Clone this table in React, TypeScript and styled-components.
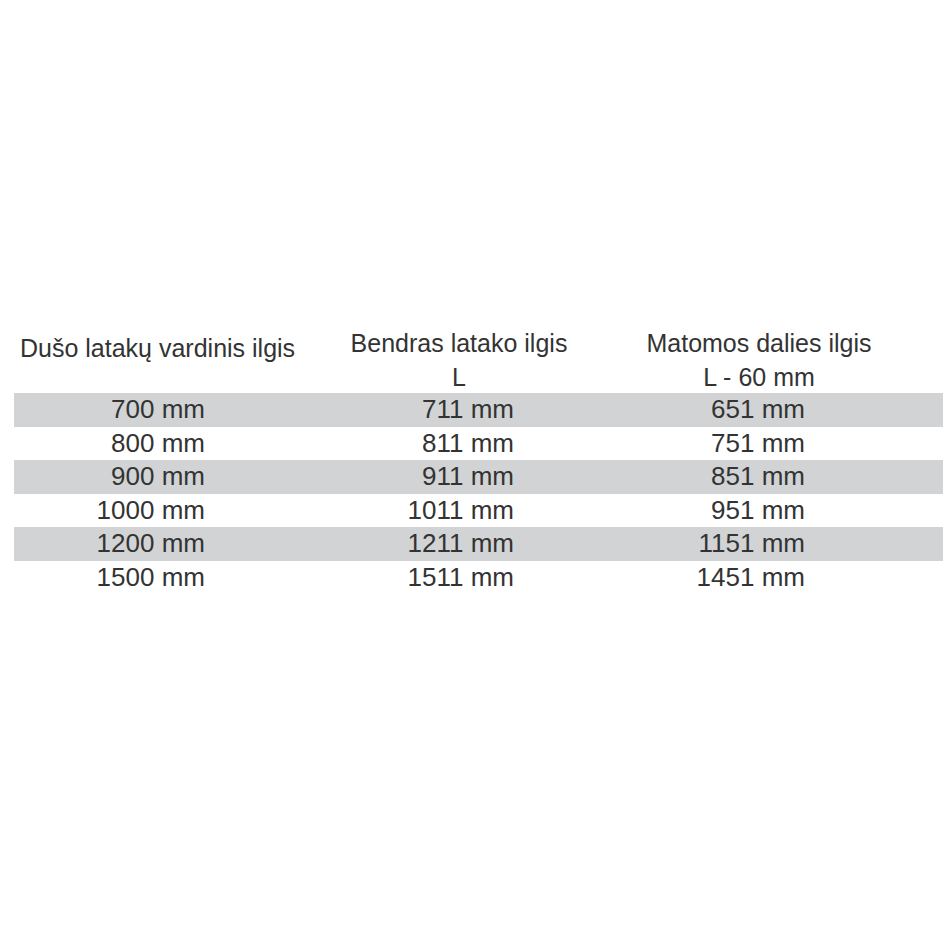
import React from "react";
import styled, { createGlobalStyle } from "styled-components";

const Global = createGlobalStyle`
  html, body { margin: 0; padding: 0; background: #fff; }
  body { font-family: "Liberation Sans", Arial, sans-serif; color: #333; }
`;

const Page = styled.div`
  width: 943px;
  height: 943px;
  padding-top: 326px;
  box-sizing: border-box;
`;

const Header = styled.div`
  display: grid;
  grid-template-columns: 305px 308px 292px;
  font-size: 25px;
  line-height: 34px;
  height: 67px;
`;

const HeadCell = styled.div<{ $left?: boolean; $offset?: number }>`
  text-align: ${(p) => (p.$left ? "left" : "center")};
  padding-left: ${(p) => (p.$left ? "20px" : "0")};
  margin-top: ${(p) => p.$offset ?? 0}px;
  white-space: nowrap;
`;

const Row = styled.div<{ $shade: boolean }>`
  margin-left: 14px;
  height: 33.5px;
  display: grid;
  grid-template-columns: 191px 309px 291px;
  align-items: center;
  background: ${(p) => (p.$shade ? "#d1d3d4" : "#fff")};
  font-size: 26px;
`;

const Cell = styled.div`
  text-align: right;
  line-height: 33.5px;
  white-space: nowrap;
`;

const rows = [
  ["700 mm", "711 mm", "651 mm"],
  ["800 mm", "811 mm", "751 mm"],
  ["900 mm", "911 mm", "851 mm"],
  ["1000 mm", "1011 mm", "951 mm"],
  ["1200 mm", "1211 mm", "1151 mm"],
  ["1500 mm", "1511 mm", "1451 mm"],
];

export default function App() {
  return (
    <>
      <Global />
      <Page>
        <Header>
          <HeadCell $left $offset={5}>Dušo latakų vardinis ilgis</HeadCell>
          <HeadCell>
            Bendras latako ilgis
            <br />L
          </HeadCell>
          <HeadCell>
            Matomos dalies ilgis
            <br />L - 60 mm
          </HeadCell>
        </Header>
        {rows.map((r, i) => (
          <Row key={i} $shade={i % 2 === 0}>
            {r.map((c, j) => (
              <Cell key={j}>{c}</Cell>
            ))}
          </Row>
        ))}
      </Page>
    </>
  );
}
